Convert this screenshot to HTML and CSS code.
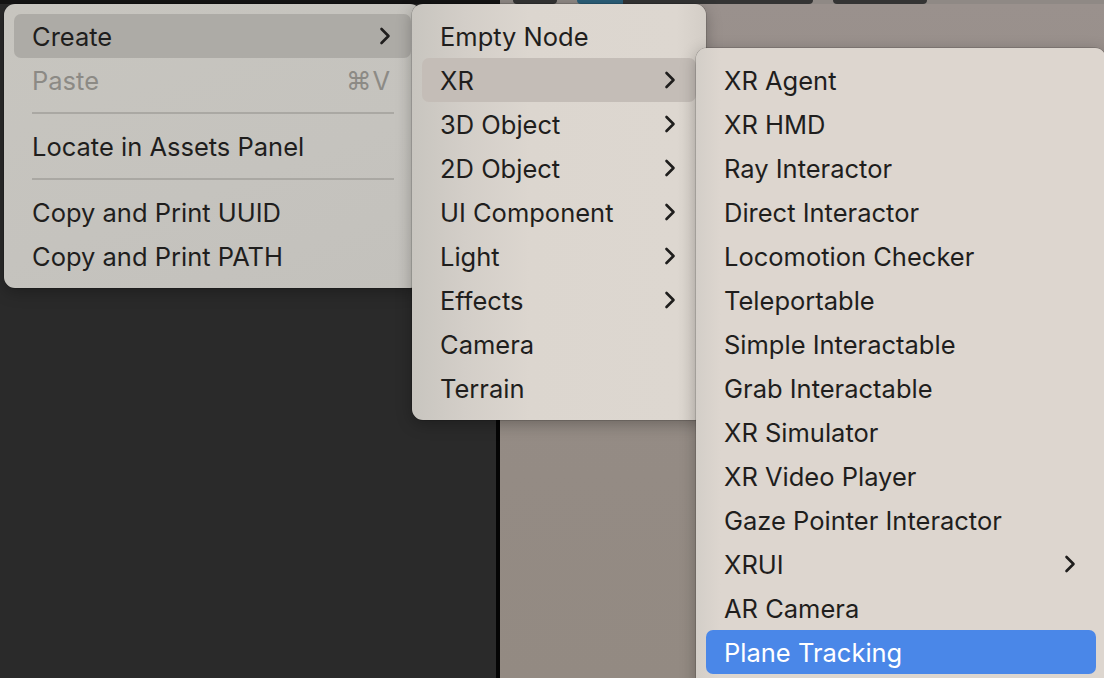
FILE: index.html
```html
<!DOCTYPE html>
<html lang="en">
<head>
<meta charset="utf-8">
<title>Create menu</title>
<link rel="stylesheet" href="styles.css">
</head>
<body>
<div class="desk">
  <div class="topbar">
    <div class="tb-black"></div>
    <div class="tb-gap"></div>
    <div class="tb-tab w44"></div>
    <div class="tb-gap g20"></div>
    <div class="tb-tab blue"></div>
    <div class="tb-tab w190"></div>
    <div class="tb-gap g20"></div>
    <div class="tb-tab w94"></div>
  </div>
  <div class="panes">
    <div class="pane-left"></div>
    <div class="pane-divider"></div>
    <div class="pane-right"></div>
  </div>
</div>

<div class="menu menu-main">
  <div class="item active"><span class="label">Create</span><svg class="chev" viewBox="0 0 12 18"><path d="M2.5 2 L9.5 9 L2.5 16"/></svg></div>
  <div class="item disabled"><span class="label">Paste</span><span class="shortcut">⌘V</span></div>
  <div class="sep"></div>
  <div class="item"><span class="label">Locate in Assets Panel</span></div>
  <div class="sep"></div>
  <div class="item"><span class="label">Copy and Print UUID</span></div>
  <div class="item"><span class="label">Copy and Print PATH</span></div>
</div>

<div class="menu menu-create">
  <div class="item"><span class="label">Empty Node</span></div>
  <div class="item active"><span class="label">XR</span><svg class="chev" viewBox="0 0 12 18"><path d="M2.5 2 L9.5 9 L2.5 16"/></svg></div>
  <div class="item"><span class="label">3D Object</span><svg class="chev" viewBox="0 0 12 18"><path d="M2.5 2 L9.5 9 L2.5 16"/></svg></div>
  <div class="item"><span class="label">2D Object</span><svg class="chev" viewBox="0 0 12 18"><path d="M2.5 2 L9.5 9 L2.5 16"/></svg></div>
  <div class="item"><span class="label">UI Component</span><svg class="chev" viewBox="0 0 12 18"><path d="M2.5 2 L9.5 9 L2.5 16"/></svg></div>
  <div class="item"><span class="label">Light</span><svg class="chev" viewBox="0 0 12 18"><path d="M2.5 2 L9.5 9 L2.5 16"/></svg></div>
  <div class="item"><span class="label">Effects</span><svg class="chev" viewBox="0 0 12 18"><path d="M2.5 2 L9.5 9 L2.5 16"/></svg></div>
  <div class="item"><span class="label">Camera</span></div>
  <div class="item"><span class="label">Terrain</span></div>
</div>

<div class="menu menu-xr">
  <div class="item"><span class="label">XR Agent</span></div>
  <div class="item"><span class="label">XR HMD</span></div>
  <div class="item"><span class="label">Ray Interactor</span></div>
  <div class="item"><span class="label">Direct Interactor</span></div>
  <div class="item"><span class="label">Locomotion Checker</span></div>
  <div class="item"><span class="label">Teleportable</span></div>
  <div class="item"><span class="label">Simple Interactable</span></div>
  <div class="item"><span class="label">Grab Interactable</span></div>
  <div class="item"><span class="label">XR Simulator</span></div>
  <div class="item"><span class="label">XR Video Player</span></div>
  <div class="item"><span class="label">Gaze Pointer Interactor</span></div>
  <div class="item"><span class="label">XRUI</span><svg class="chev" viewBox="0 0 12 18"><path d="M2.5 2 L9.5 9 L2.5 16"/></svg></div>
  <div class="item"><span class="label">AR Camera</span></div>
  <div class="item selected"><span class="label">Plane Tracking</span></div>
</div>
</body>
</html>
```

FILE: styles.css
```css
* { box-sizing: border-box; }

html, body {
  margin: 0;
  padding: 0;
  width: 1104px;
  height: 678px;
  overflow: hidden;
}

body {
  position: relative;
  font-family: Inter, "Noto Sans", "Liberation Sans", sans-serif;
  background: #2a2a2a;
}

.desk {
  display: flex;
  flex-direction: column;
  width: 1104px;
  height: 678px;
}

.topbar {
  display: flex;
  height: 4px;
  background: #8f8985;
  flex: none;
}
.tb-black { width: 500px; background: #141414; }
.tb-gap { width: 13px; }
.tb-gap.g20 { width: 20px; }
.tb-tab { background: #343434; border-radius: 0 0 4px 4px; }
.tb-tab.w44 { width: 44px; }
.tb-tab.blue { width: 46px; background: #2b5f79; border-radius: 0 0 0 4px; }
.tb-tab.w190 { width: 190px; border-radius: 0 0 4px 0; }
.tb-tab.w94 { width: 94px; }

.panes {
  flex: 1;
  display: flex;
}
.pane-left {
  width: 496px;
  background: #2a2a2a;
}
.pane-divider {
  width: 4px;
  background: #050505;
}
.pane-right {
  flex: 1;
  background: linear-gradient(180deg, #9a918d 0%, #958c86 40%, #938a82 100%);
}

/* menus */
.menu {
  position: absolute;
  padding: 10px;
  border-radius: 11px;
  box-shadow: 0 0 0 0.5px rgba(0,0,0,0.25), 0 4px 16px rgba(0,0,0,0.28);
  color: #1f1e1d;
  font-size: 25.5px;
  letter-spacing: 0;
}

.menu-main {
  left: 4px;
  top: 4px;
  width: 417px;
  background: linear-gradient(160deg, #c7c5bf 0%, #c5c3be 60%, #c3c1bc 100%);
}

.menu-create {
  left: 412px;
  top: 4px;
  width: 294px;
  background: linear-gradient(90deg, #c8c5bf 0%, #d3cec8 18%, #dcd6cf 40%, #ddd7d0 90%, #d3cdc6 100%);
}

.menu-xr {
  left: 696px;
  top: 48px;
  width: 410px;
  padding-bottom: 20px;
  background: linear-gradient(90deg, #d3cec8 0%, #ddd6cf 6%, #ddd6cf 100%);
}

.item {
  display: flex;
  align-items: center;
  height: 44px;
  padding: 0 20px 0 18px;
  border-radius: 7px;
  white-space: nowrap;
}
.item .label { flex: 1; }

.menu-main .item.active { background: #adaba6; }
.menu-create .item.active { background: #c4bdb7; }
.item.selected { background: #4a87e8; color: #ffffff; }

.item.disabled { color: #8c8a85; }
.shortcut {
  color: #8c8a85;
  letter-spacing: 1px;
}

.chev {
  width: 12px;
  height: 18px;
  flex: none;
  fill: none;
  stroke: #1f1e1d;
  stroke-width: 2.6;
  stroke-linecap: round;
  stroke-linejoin: round;
}

.sep {
  height: 22px;
  display: flex;
  align-items: center;
  padding: 0 17px 0 18px;
}
.sep::before {
  content: "";
  flex: 1;
  height: 2px;
  background: #aaa8a3;
}
```
